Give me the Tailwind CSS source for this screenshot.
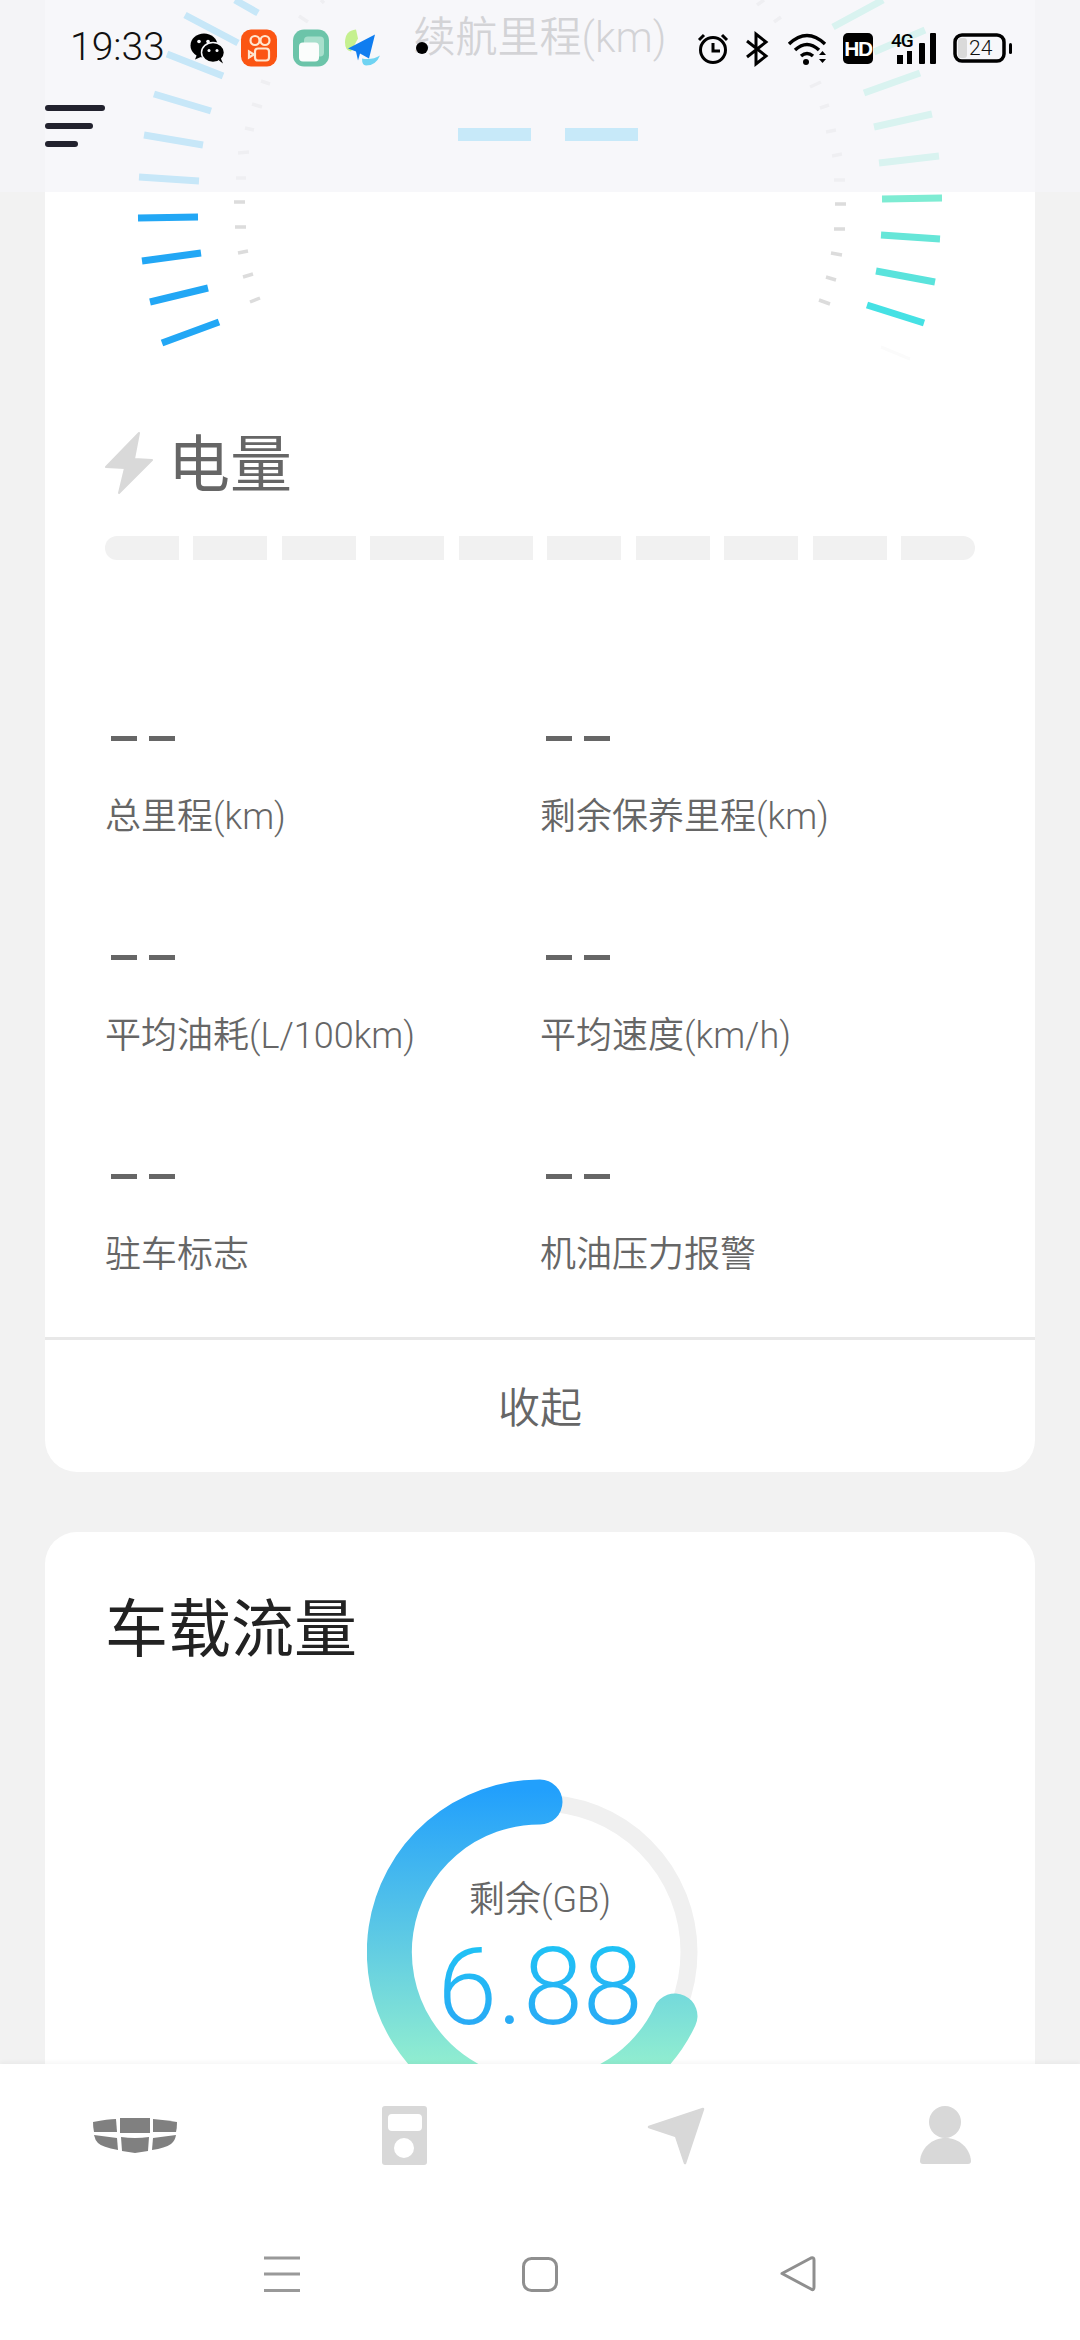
<!DOCTYPE html>
<html lang="zh">
<head>
<meta charset="utf-8">
<script src="https://cdn.jsdelivr.net/npm/@tailwindcss/browser@4"></script>
</head>
<body class="bg-[#f2f2f2]">
<div class="relative w-[1080px] h-[2340px] overflow-hidden flex flex-col bg-[#f2f2f2] font-['Roboto','Noto_Sans_CJK_SC',sans-serif] font-[350] text-[#666]">

  <main class="flex-1 overflow-hidden px-[45px]">
    <section class="bg-white rounded-b-[32px]">
      <div class="relative h-[400px]">
        <svg class="absolute left-[-45px] top-0" width="1080" height="400" viewBox="0 0 1080 400" fill="none">
          <path stroke="#30b8f5" stroke-width="7" d="M235 0L258 13M185 15L238 43M167 54L223 76M154 94L211 111M144 135L203 145M139 177L199 181"/>
          <path stroke="#22a7f5" stroke-width="7" d="M138 218L198 217M142 261L201 253M150 302L208 288M162 343L219 322"/>
          <g stroke="#dcdcdc" stroke-width="3.5">
            <path d="M321 0L324 3M299 16L308 22M261 81L270 84M252 104L262 107M245 128L254 130M238 153L249 152M236 178L246 178M234 202L245 202M235 227L246 227M238 253L248 251M243 277L253 274M250 302L260 298"/>
            <path d="M757 5L764 0M774 22L781 17M810 87L821 82M820 108L829 105M826 132L836 130M832 156L842 154M834 180L845 180M835 204L846 204M834 229L845 229M831 253L842 255M826 277L836 280M819 300L830 304"/>
          </g>
          <path d="M881 347L910 359" stroke="#fbfbfb" stroke-width="3"/>
          <g stroke-width="7">
            <path stroke="#7eecd3" d="M833 27L883 0M874 52L925 30M864 93L920 73M874 127L932 114M879 163L939 156M882 199L942 198"/>
            <path stroke="#66e6d8" d="M881 235L940 239"/>
            <path stroke="#5ae3dc" d="M876 271L935 282"/>
            <path stroke="#45e1e4" d="M867 305L924 323"/>
          </g>
        </svg>
        <div class="absolute inset-x-0 top-[14px] text-center text-[42px] leading-[48px]">续航里程(km)</div>
        <div class="absolute left-[413px] top-[128px] flex gap-[34px]">
          <span class="w-[73px] h-[13px] bg-[#31c1f8]"></span>
          <span class="w-[73px] h-[13px] bg-[#31c1f8]"></span>
        </div>
      </div>

      <div class="px-[60px]">
        <div class="flex items-center h-[62px] mt-[32px]">
          <svg width="48" height="62" viewBox="0 0 48 62" fill="#d9d9d9"><path d="M34 1L1 35L20 36L14 61L47 28L29 27Z" stroke="#d9d9d9" stroke-width="2" stroke-linejoin="round"/></svg>
          <span class="ml-[15px] mt-[6px] text-[62px] leading-[62px] font-normal">电量</span>
        </div>
        <div class="flex gap-[14.5px] h-[24px] mt-[42px]">
          <span class="flex-1 bg-[#f1f1f1] rounded-l-[12px]"></span>
          <span class="flex-1 bg-[#f1f1f1]"></span>
          <span class="flex-1 bg-[#f1f1f1]"></span>
          <span class="flex-1 bg-[#f1f1f1]"></span>
          <span class="flex-1 bg-[#f1f1f1]"></span>
          <span class="flex-1 bg-[#f1f1f1]"></span>
          <span class="flex-1 bg-[#f1f1f1]"></span>
          <span class="flex-1 bg-[#f1f1f1]"></span>
          <span class="flex-1 bg-[#f1f1f1]"></span>
          <span class="flex-1 bg-[#f1f1f1] rounded-r-[12px]"></span>
        </div>
        <div class="grid grid-cols-[435px_1fr] gap-y-[117px] mt-[176px]">
          <div><div class="flex gap-[12px] h-[5px] ml-[6px]"><i class="w-[26px] bg-[#666]"></i><i class="w-[26px] bg-[#666]"></i></div><p class="mt-[55px] text-[36px] leading-[42px]">总里程(km)</p></div>
          <div><div class="flex gap-[12px] h-[5px] ml-[6px]"><i class="w-[26px] bg-[#666]"></i><i class="w-[26px] bg-[#666]"></i></div><p class="mt-[55px] text-[36px] leading-[42px]">剩余保养里程(km)</p></div>
          <div><div class="flex gap-[12px] h-[5px] ml-[6px]"><i class="w-[26px] bg-[#666]"></i><i class="w-[26px] bg-[#666]"></i></div><p class="mt-[55px] text-[36px] leading-[42px]">平均油耗(L/100km)</p></div>
          <div><div class="flex gap-[12px] h-[5px] ml-[6px]"><i class="w-[26px] bg-[#666]"></i><i class="w-[26px] bg-[#666]"></i></div><p class="mt-[55px] text-[36px] leading-[42px]">平均速度(km/h)</p></div>
          <div><div class="flex gap-[12px] h-[5px] ml-[6px]"><i class="w-[26px] bg-[#666]"></i><i class="w-[26px] bg-[#666]"></i></div><p class="mt-[55px] text-[36px] leading-[42px]">驻车标志</p></div>
          <div><div class="flex gap-[12px] h-[5px] ml-[6px]"><i class="w-[26px] bg-[#666]"></i><i class="w-[26px] bg-[#666]"></i></div><p class="mt-[55px] text-[36px] leading-[42px]">机油压力报警</p></div>
        </div>
      </div>

      <div class="mt-[61px] border-t-[3px] border-[#e8e8e8] h-[135px] pt-[5px] flex items-center justify-center text-[42px]">收起</div>
    </section>

    <section class="mt-[60px] h-[640px] bg-white rounded-t-[32px] relative">
      <h2 class="pt-[62px] pl-[60px] text-[63px] leading-[72px] font-normal text-[#222]">车载流量</h2>
      <div class="absolute left-[322px] top-[247px] w-[346px] h-[346px]">
        <svg class="absolute inset-0" width="346" height="346" viewBox="367 1779 346 346" fill="none">
          <defs>
            <linearGradient id="g" gradientUnits="userSpaceOnUse" x1="0" y1="1790" x2="0" y2="2070">
              <stop offset="0" stop-color="#22a0fc"/><stop offset="1" stop-color="#93efcf"/>
            </linearGradient>
          </defs>
          <circle cx="540" cy="1952" r="149" stroke="#f0f0f0" stroke-width="17"/>
          <path d="M540 1802A150 150 0 1 0 675 2016" stroke="url(#g)" stroke-width="45" stroke-linecap="round"/>
        </svg>
        <div class="absolute inset-x-0 top-[100px] text-center text-[36px] leading-[42px]">剩余(GB)</div>
        <div class="absolute inset-x-0 top-[163px] text-center text-[108px] leading-[90px] font-light bg-linear-to-b from-[#1ec3f5] to-[#2aa8f5] bg-clip-text text-transparent">6.88</div>
      </div>
    </section>
  </main>

  <footer class="relative z-10 h-[276px] shrink-0 bg-white shadow-[0_-2px_4px_rgba(0,0,0,0.04)]">
    <div class="absolute left-0 top-0">
      <svg width="1080" height="276" viewBox="0 2064 1080 276">
        <g fill="#808080">
          <path d="M93 2122Q108 2119 116 2119L117 2132L94 2132Q93 2127 93 2122Z"/>
          <path d="M120 2118L150 2118L150 2133L120 2133Z"/>
          <path d="M153 2119Q165 2120 177 2122Q177 2128 176 2132L153 2132Z"/>
          <path d="M94 2135L117 2138L118 2150Q102 2147 98 2143Q95 2140 94 2135Z"/>
          <path d="M121 2137Q135 2139 149 2137L148 2151L135 2153L122 2151Z"/>
          <path d="M153 2138L176 2135Q175 2141 171 2144Q165 2148 152 2150Z"/>
        </g>
        <g fill="#d8d8d8">
          <path fill-rule="evenodd" d="M385 2106H424Q427 2106 427 2109V2162Q427 2165 424 2165H385Q382 2165 382 2162V2109Q382 2106 385 2106ZM392 2114Q388 2114 388 2118V2127Q388 2131 392 2131H418Q422 2131 422 2127V2118Q422 2114 418 2114ZM404 2138A10 10 0 1 0 404 2158A10 10 0 1 0 404 2138Z"/>
          <path d="M649 2127L703 2109L685 2163L676 2136Z" stroke="#d8d8d8" stroke-width="2.5" stroke-linejoin="round"/>
          <circle cx="945" cy="2122" r="16"/>
          <path d="M920 2161C921 2148 932 2138 945.500 2138C959 2138 970 2148 971 2161Q971 2164 968 2164H923Q920 2164 920 2161Z"/>
        </g>
        <path d="M264 2258H300M264 2274H300M264 2290.500H300" stroke="#999" stroke-width="3"/>
        <rect x="523.500" y="2258.500" width="33" height="32" rx="8" fill="none" stroke="#8f8f8f" stroke-width="3"/>
        <path d="M782 2273.500L811 2258Q814 2257 814 2260V2287Q814 2291 811 2289Z" fill="none" stroke="#8f8f8f" stroke-width="3" stroke-linejoin="round"/>
      </svg>
    </div>
  </footer>

  <header class="absolute inset-x-0 top-0 h-[192px] bg-[#f5f5f8]/[.77] z-20">
    <div class="absolute left-[45px] top-[105px] flex flex-col gap-[12px]">
      <span class="w-[60px] h-[6px] rounded-full bg-[#22222e]"></span>
      <span class="w-[48px] h-[6px] rounded-full bg-[#22222e]"></span>
      <span class="w-[33px] h-[6px] rounded-full bg-[#22222e]"></span>
    </div>
    <div class="absolute left-[70px] top-[24px] text-[39px] leading-[46px] text-[#111] font-light">19:33</div>
    <svg class="absolute left-0 top-0" width="1080" height="80" viewBox="0 0 1080 80">
      <g transform="translate(0 -1.500)">
      <!-- wechat -->
      <ellipse cx="204" cy="47" rx="13.500" ry="12" fill="#000"/><path d="M197 56L195 61L202 58Z" fill="#000"/>
      <ellipse cx="213" cy="54" rx="11.500" ry="10" fill="#000" stroke="#f7f7f9" stroke-width="1.500"/><path d="M219 62L223 65L220 58Z" fill="#000"/>
      <circle cx="199" cy="43" r="1.800" fill="#f7f7f9"/><circle cx="208" cy="43" r="1.800" fill="#f7f7f9"/>
      <circle cx="209" cy="52" r="1.500" fill="#f7f7f9"/><circle cx="217" cy="52" r="1.500" fill="#f7f7f9"/>
      <!-- kuaishou -->
      <rect x="241" y="31" width="36" height="37" rx="10" fill="#fb5513"/>
      <g fill="none" stroke="#ffe6cf" stroke-width="2.200"><circle cx="255" cy="42" r="4.500"/><circle cx="265" cy="42" r="4.500"/><rect x="255" y="50" width="14" height="12" rx="3"/><path d="M249 53L254 56L249 59Z"/></g>
      <!-- green app -->
      <rect x="293" y="31" width="36" height="37" rx="11" fill="#6cc4a9"/>
      <rect x="304" y="38" width="20" height="20" rx="4" fill="#a8dfcc"/>
      <rect x="299" y="44" width="20" height="19" rx="4" fill="#fbfdfc"/>
      <!-- plane app -->
      <path d="M356 31Q345 32 345 44Q345 52 351 53L358 40Z" fill="#c5f08f"/>
      <path d="M362 60Q372 62 380 57Q376 67 366 67Q362 67 362 60Z" fill="#6fd3f2"/>
      <path d="M348 50L375 36L369 60L360 55L358 62L356 53Z" fill="#0f7df0"/>
      </g>
      <circle cx="422" cy="48" r="6" fill="#000"/>
      <!-- alarm -->
      <circle cx="713" cy="50" r="12.500" fill="none" stroke="#000" stroke-width="3"/>
      <path d="M713 43V51H720M699 40L704 35M727 40L722 35" fill="none" stroke="#000" stroke-width="3"/>
      <!-- bluetooth -->
      <path d="M747 41L766 56L756 64V34L766 42L747 57" fill="none" stroke="#000" stroke-width="3"/>
      <!-- wifi -->
      <g fill="none" stroke="#000" stroke-width="3.500"><path d="M789 44Q807 27 825 44"/><path d="M795 50Q807 39 819 50"/><path d="M801 56Q807 51 813 56"/></g>
      <circle cx="806" cy="62" r="3" fill="#000"/>
      <path d="M819 55L822.500 51L826 55ZM819 59L822.500 63L826 59Z" fill="#000"/>
      <!-- HD -->
      <rect x="843" y="33" width="30" height="31" rx="5" fill="#000"/>
      <!-- signal -->
      <rect x="897" y="55" width="6" height="9" fill="#000"/><rect x="907" y="51" width="5" height="13" fill="#000"/><rect x="919" y="43" width="6" height="21" rx="1" fill="#000"/><rect x="930" y="33" width="6" height="31" rx="1" fill="#000"/>
      <!-- battery -->
      <rect x="955" y="35" width="49" height="26" rx="7" fill="none" stroke="#000" stroke-width="3.500"/>
      <rect x="958" y="38" width="9" height="20" rx="3" fill="#dadada"/>
      <rect x="1009" y="43" width="3" height="11" rx="1.500" fill="#000"/>
    </svg>
    <span class="absolute left-[843px] top-[33px] w-[30px] h-[31px] flex items-center justify-center text-white text-[21px] font-bold font-['Liberation_Sans','Roboto',sans-serif] tracking-[-1.5px]">HD</span>
    <span class="absolute left-[891px] top-[31px] text-[#000] text-[19px] leading-[20px] font-medium tracking-[-1px]">4G</span>
    <span class="absolute left-[969px] top-[36px] text-[#111] text-[21px] leading-[24px] font-light">24</span>
  </header>
</div>
</body>
</html>
